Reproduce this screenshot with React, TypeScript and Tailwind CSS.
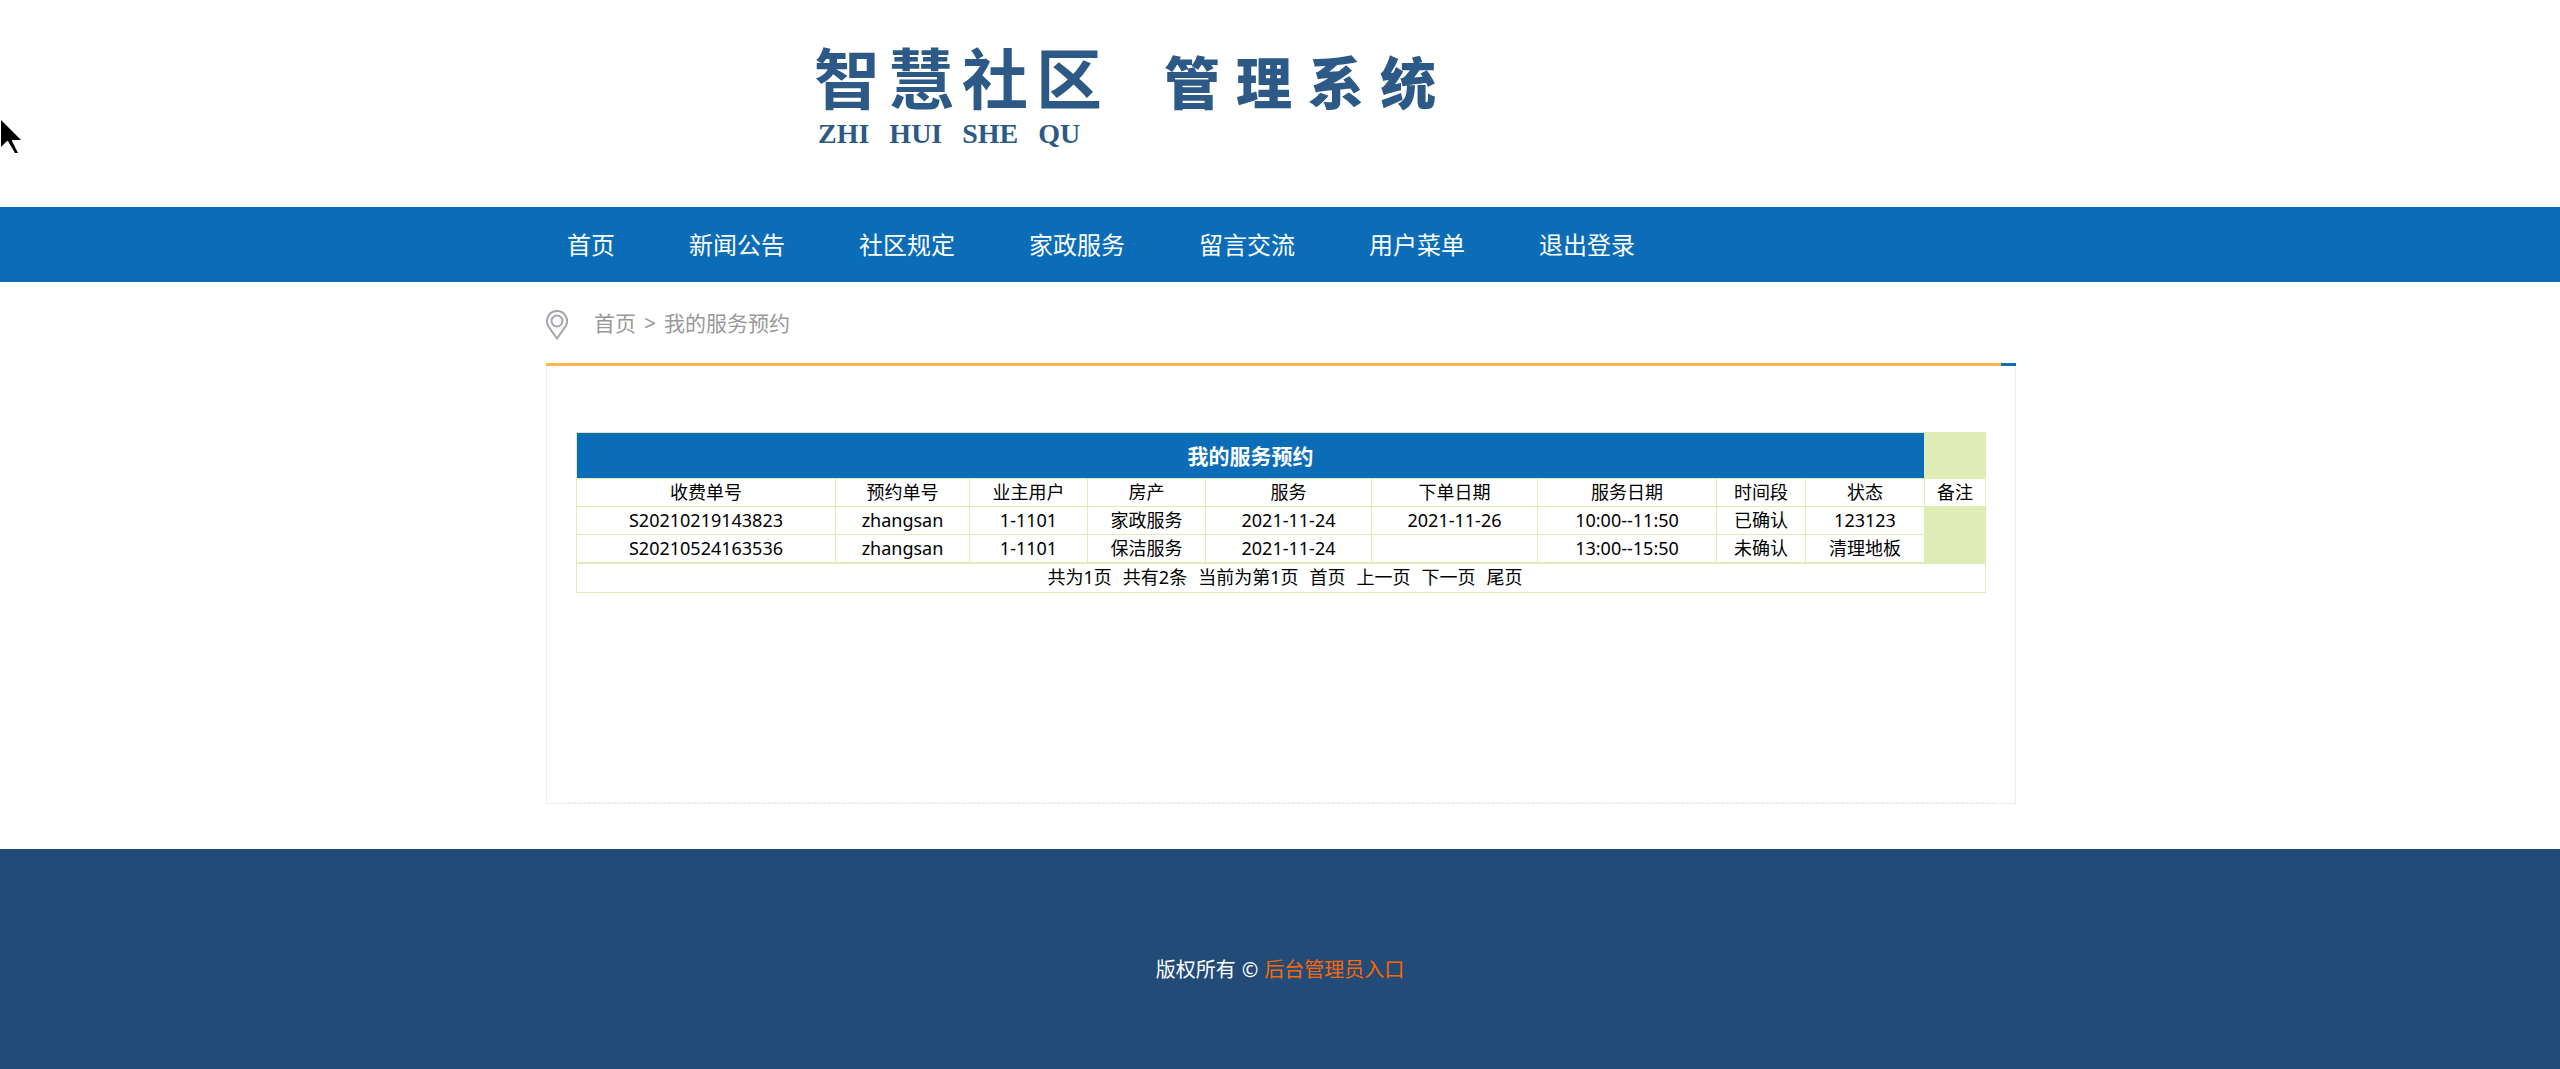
const navItems = ["首页", "新闻公告", "社区规定", "家政服务", "留言交流", "用户菜单", "退出登录"];

const columns = [
  { title: "收费单号", width: "w-[258px]" },
  { title: "预约单号", width: "w-[133px]" },
  { title: "业主用户", width: "w-[117px]" },
  { title: "房产", width: "w-[117px]" },
  { title: "服务", width: "w-[165px]" },
  { title: "下单日期", width: "w-[165px]" },
  { title: "服务日期", width: "w-[178px]" },
  { title: "时间段", width: "w-[88px]" },
  { title: "状态", width: "w-[118px]" },
  { title: "备注", width: "w-[60px]" },
];

const orders = [
  ["S20210219143823", "zhangsan", "1-1101", "家政服务", "2021-11-24", "2021-11-26", "10:00--11:50", "已确认", "123123"],
  ["S20210524163536", "zhangsan", "1-1101", "保洁服务", "2021-11-24", "", "13:00--15:50", "未确认", "清理地板"],
];

const pagerLinks = ["首页", "上一页", "下一页", "尾页"];

function Logo() {
  return (
    <div className="flex text-[#2c5985]">
      <div className="w-[350px]">
        <div className="flex gap-2 text-[66px] leading-[80px] font-bold">
          <span>智</span>
          <span>慧</span>
          <span>社</span>
          <span>区</span>
        </div>
        <div className="flex gap-5 pl-1 font-['Liberation_Serif',serif] text-[28px] leading-8 font-bold">
          <span>ZHI</span>
          <span>HUI</span>
          <span>SHE</span>
          <span>QU</span>
        </div>
      </div>
      <div className="flex gap-4 pt-1 text-[56px] leading-[80px] font-black">
        <span>管</span>
        <span>理</span>
        <span>系</span>
        <span>统</span>
      </div>
    </div>
  );
}

function Header() {
  return (
    <header>
      <div className="mx-auto h-[207px] w-full max-w-[1470px] pt-[38px] pl-[269px]">
        <Logo />
      </div>
      <nav className="bg-[#0b6db7] pl-0.5">
        <ul className="mx-auto flex h-[75px] w-full max-w-[1470px] items-center gap-[74px] pt-px pl-[21px] text-2xl text-white">
          {navItems.map((item) => (
            <li key={item}>
              <a href="#">{item}</a>
            </li>
          ))}
        </ul>
      </nav>
    </header>
  );
}

function Breadcrumb() {
  return (
    <div className="flex h-[81px] items-center pt-0.5 text-[21px] text-[#999]">
      <svg width="22" height="30" viewBox="0 0 22 30" fill="none" stroke="#a3a3aa" strokeWidth="2" className="mt-0.5">
        <path d="M11 28.500L2.200 16C-1.500 8 4 1 11 1s12.500 7 8.800 15z" />
        <circle cx="11" cy="11" r="5.500" />
      </svg>
      <a href="#" className="ml-[26px]">首页</a>
      <span className="mx-2">&gt;</span>
      <a href="#">我的服务预约</a>
    </div>
  );
}

function OrderTable() {
  return (
    <table className="w-full table-fixed border-separate border-spacing-px bg-[#e0ecb5] text-center text-lg leading-[27px] text-black">
      <colgroup>
        {columns.map((col) => (
          <col key={col.title} className={col.width} />
        ))}
      </colgroup>
      <thead>
        <tr>
          <th colSpan={9} className="h-[45px] bg-[#0b6db7] pt-0.5 text-[21px] font-bold text-white">
            我的服务预约
          </th>
        </tr>
        <tr>
          {columns.map((col) => (
            <th key={col.title} className="bg-white font-normal">{col.title}</th>
          ))}
        </tr>
      </thead>
      <tbody>
        {orders.map((order) => (
          <tr key={order[0]}>
            {order.map((value, i) => (
              <td key={i} className="bg-white">{value}</td>
            ))}
          </tr>
        ))}
      </tbody>
    </table>
  );
}

function Pager() {
  return (
    <div className="flex h-[30px] items-center justify-center gap-[11px] border border-[#e0ecb5] pb-0.5 pl-2 text-lg text-black">
      <span>共为1页</span>
      <span>共有2条</span>
      <span>当前为第1页</span>
      {pagerLinks.map((link) => (
        <a key={link} href="#">{link}</a>
      ))}
    </div>
  );
}

function Footer() {
  return (
    <footer className="flex h-[220px] items-center justify-center gap-[6px] bg-[#224b77] pt-[22px] text-xl text-white">
      <span>版权所有</span>
      <span>©</span>
      <a href="#" className="text-[#ff6600]">后台管理员入口</a>
    </footer>
  );
}

function App() {
  return (
    <div className="relative min-h-screen bg-white font-['Noto_Sans','Noto_Sans_CJK_SC',sans-serif]">
      <Header />
      <div className="pb-[45px] pl-0.5">
        <main className="mx-auto w-full max-w-[1470px]">
          <Breadcrumb />
          <div className="flex h-[3px] bg-[#ffb54e]">
            <div className="ml-auto w-[15px] bg-[#0b6db7]" />
          </div>
          <div className="flex min-h-[438px] flex-col border border-t-0 border-[#eee]">
            <div className="px-[29px] pt-[66px]">
              <OrderTable />
              <Pager />
            </div>
            <div className="mx-[21px] mt-auto border-t border-dashed border-[#eee]" />
          </div>
        </main>
      </div>
      <Footer />
      <svg width="22" height="35" viewBox="0 0 22 35" className="absolute top-[119px] left-0">
        <path d="M1 1v27l6-6h1l7 12h3l-6-12v-1h9z" />
      </svg>
    </div>
  );
}

export default App;
